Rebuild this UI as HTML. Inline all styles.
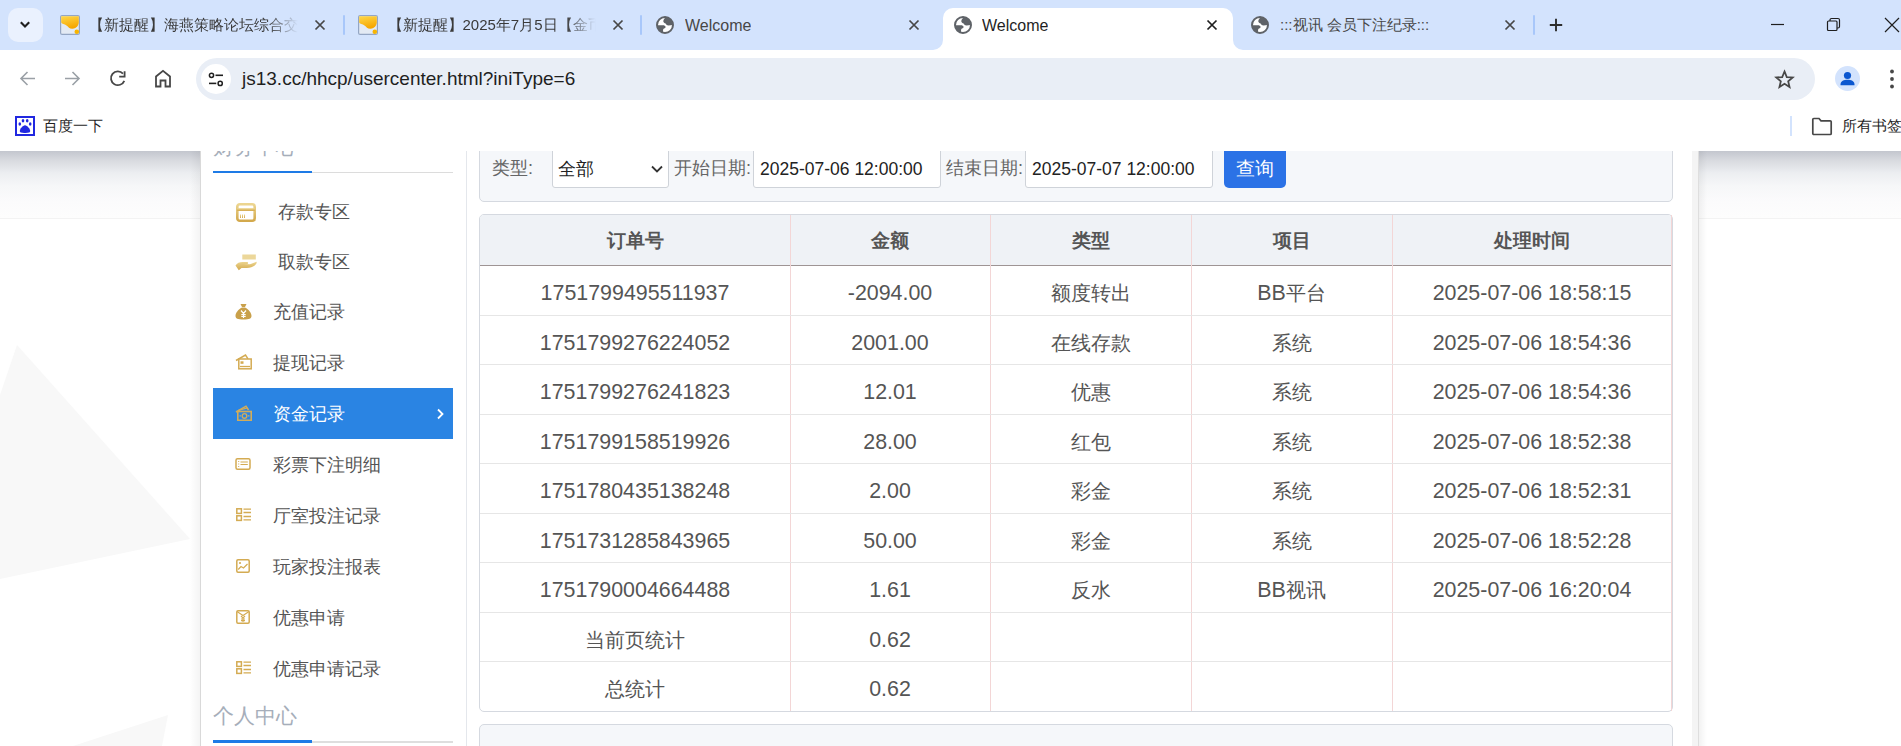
<!DOCTYPE html>
<html><head><meta charset="utf-8">
<style>
*{box-sizing:border-box;margin:0;padding:0}
html,body{width:1901px;height:746px;overflow:hidden;background:#fff;font-family:"Liberation Sans",sans-serif}
body{position:relative}
.a{position:absolute}
#tabs{left:0;top:0;width:1901px;height:50px;background:#d3e3fd}
.tt{position:absolute;top:15px;height:20px;line-height:20px;font-size:15px;color:#1f1f1f;white-space:nowrap;overflow:hidden}
.fade{-webkit-mask-image:linear-gradient(to right,#000 84%,transparent 98%)}
.sep{position:absolute;width:2px;height:20px;background:#a8c7fa;top:15px;border-radius:1px}
#toolbar{left:0;top:50px;width:1901px;height:57px;background:#fff}
#omni{left:196px;top:58px;width:1619px;height:42px;border-radius:21px;background:#e9eef6}
#bm{left:0;top:107px;width:1901px;height:43px;background:#fff}
#page{left:0;top:150px;width:1901px;height:596px;background:#fff;overflow:hidden}
.stitle{font-size:21px;line-height:30px;color:#a6aeba;white-space:nowrap}
.item{left:12px;width:240px;height:50.75px}
.item .tx{position:absolute;left:60px;top:1px;line-height:50px;font-size:18px;color:#555;white-space:nowrap}
.item.act{background:#2a84e3}
.item.act .tx{color:#fff}
.flab{top:0;line-height:37px;font-size:18px;color:#666;white-space:nowrap}
.fbox{top:-10px;height:48px;background:#fff;border:1px solid #cfd3d9;border-radius:3px}
.fin{position:absolute;left:6px;top:10px;line-height:37px;font-size:17.5px;color:#222;white-space:nowrap}
.th{height:50px;line-height:52px;text-align:center;font-size:18.6px;font-weight:bold;color:#555;white-space:nowrap}
.cj{font-size:20.4px}
.td{line-height:49px;text-align:center;font-size:21.4px;color:#555;white-space:nowrap}
</style></head><body>
<!-- TABS -->
<div id="tabs" class="a">
  <div class="a" style="left:8px;top:8px;width:35px;height:34px;border-radius:10px;background:#eaf1fe"></div>
  <svg class="a" style="left:17px;top:16px" width="16" height="16" viewBox="0 0 16 16"><path d="M3.8 6.3 L8 10.5 L12.2 6.3" fill="none" stroke="#1f1f1f" stroke-width="2.1"/></svg>
  <!-- tab1 -->
  <svg class="a" style="left:60px;top:15px" width="20" height="20" viewBox="0 0 20 20"><defs><linearGradient id="fy" x1="0" y1="0" x2="0.3" y2="1"><stop offset="0" stop-color="#ffd84a"/><stop offset="1" stop-color="#f6a700"/></linearGradient></defs><rect x="0.6" y="0.6" width="18.8" height="18.8" rx="1.5" fill="#e3eaf4" stroke="#94a6c4" stroke-width="1.2"/><path d="M1.2 1.2 H18.8 V7.5 C18.6 10 17 13.5 12.5 13.8 C9.5 14 8.5 12 6.5 10.5 C4.5 9 2 9 1.2 7.5Z" fill="url(#fy)"/><circle cx="16.8" cy="16.8" r="2.3" fill="#f7b400"/></svg>
  <div class="tt fade" style="left:89px;width:213px;color:#3a3a3a">【新提醒】海燕策略论坛综合交流</div>
  <svg class="a" style="left:314px;top:19px" width="12" height="12" viewBox="0 0 12 12"><path d="M1.5 1.5L10.5 10.5M10.5 1.5L1.5 10.5" stroke="#474747" stroke-width="1.75"/></svg>
  <div class="sep" style="left:343px"></div>
  <!-- tab2 -->
  <svg class="a" style="left:358px;top:15px" width="20" height="20" viewBox="0 0 20 20"><defs><linearGradient id="fy" x1="0" y1="0" x2="0.3" y2="1"><stop offset="0" stop-color="#ffd84a"/><stop offset="1" stop-color="#f6a700"/></linearGradient></defs><rect x="0.6" y="0.6" width="18.8" height="18.8" rx="1.5" fill="#e3eaf4" stroke="#94a6c4" stroke-width="1.2"/><path d="M1.2 1.2 H18.8 V7.5 C18.6 10 17 13.5 12.5 13.8 C9.5 14 8.5 12 6.5 10.5 C4.5 9 2 9 1.2 7.5Z" fill="url(#fy)"/><circle cx="16.8" cy="16.8" r="2.3" fill="#f7b400"/></svg>
  <div class="tt fade" style="left:387.5px;width:212px;color:#3a3a3a">【新提醒】2025年7月5日【金币</div>
  <svg class="a" style="left:612px;top:19px" width="12" height="12" viewBox="0 0 12 12"><path d="M1.5 1.5L10.5 10.5M10.5 1.5L1.5 10.5" stroke="#474747" stroke-width="1.75"/></svg>
  <div class="sep" style="left:640px"></div>
  <!-- tab3 -->
  <svg class="a globe" style="left:656px;top:16px" width="18" height="18" viewBox="0 0 18 18"><circle cx="9" cy="9" r="8" fill="#fff" stroke="#5f6368" stroke-width="2"/><path d="M9.8 1.2 C8.6 2.2 7.4 3.6 7.3 5.2 C7.2 6.6 8.8 6.8 9.6 7.6 C10.4 8.6 10.8 9.6 12.6 9.6 C14 9.6 15.2 9.2 16.8 9 A8 8 0 0 0 9.8 1.2Z" fill="#5f6368"/><path d="M1.2 9.3 L6.8 9.3 C8.2 9.3 9.6 9.8 9.6 11 C9.6 12.2 8 12.3 7.4 13 C7 13.6 7 15 7 16.8 A8 8 0 0 1 1.2 9.3Z" fill="#5f6368"/></svg>
  <div class="tt" style="left:685px;color:#474747;font-size:16px;top:16px">Welcome</div>
  <svg class="a" style="left:908px;top:19px" width="12" height="12" viewBox="0 0 12 12"><path d="M1.5 1.5L10.5 10.5M10.5 1.5L1.5 10.5" stroke="#474747" stroke-width="1.75"/></svg>
  <!-- active tab4 -->
  <svg class="a" style="left:933px;top:8px" width="310" height="42" viewBox="0 0 310 42"><path d="M0 42 A10 10 0 0 0 10 32 V10 A10 10 0 0 1 20 0 H290 A10 10 0 0 1 300 10 V32 A10 10 0 0 0 310 42Z" fill="#fff"/></svg>
  <svg class="a" style="left:954px;top:16px" width="18" height="18" viewBox="0 0 18 18"><circle cx="9" cy="9" r="8" fill="#fff" stroke="#5f6368" stroke-width="2"/><path d="M9.8 1.2 C8.6 2.2 7.4 3.6 7.3 5.2 C7.2 6.6 8.8 6.8 9.6 7.6 C10.4 8.6 10.8 9.6 12.6 9.6 C14 9.6 15.2 9.2 16.8 9 A8 8 0 0 0 9.8 1.2Z" fill="#5f6368"/><path d="M1.2 9.3 L6.8 9.3 C8.2 9.3 9.6 9.8 9.6 11 C9.6 12.2 8 12.3 7.4 13 C7 13.6 7 15 7 16.8 A8 8 0 0 1 1.2 9.3Z" fill="#5f6368"/></svg>
  <div class="tt" style="left:982px;font-size:16px;top:16px">Welcome</div>
  <svg class="a" style="left:1206px;top:19px" width="12" height="12" viewBox="0 0 12 12"><path d="M1.5 1.5L10.5 10.5M10.5 1.5L1.5 10.5" stroke="#1f1f1f" stroke-width="1.75"/></svg>
  <!-- tab5 -->
  <svg class="a" style="left:1251px;top:16px" width="18" height="18" viewBox="0 0 18 18"><circle cx="9" cy="9" r="8" fill="#fff" stroke="#5f6368" stroke-width="2"/><path d="M9.8 1.2 C8.6 2.2 7.4 3.6 7.3 5.2 C7.2 6.6 8.8 6.8 9.6 7.6 C10.4 8.6 10.8 9.6 12.6 9.6 C14 9.6 15.2 9.2 16.8 9 A8 8 0 0 0 9.8 1.2Z" fill="#5f6368"/><path d="M1.2 9.3 L6.8 9.3 C8.2 9.3 9.6 9.8 9.6 11 C9.6 12.2 8 12.3 7.4 13 C7 13.6 7 15 7 16.8 A8 8 0 0 1 1.2 9.3Z" fill="#5f6368"/></svg>
  <div class="tt" style="left:1280px;color:#474747">:::视讯 会员下注纪录:::</div>
  <svg class="a" style="left:1504px;top:19px" width="12" height="12" viewBox="0 0 12 12"><path d="M1.5 1.5L10.5 10.5M10.5 1.5L1.5 10.5" stroke="#474747" stroke-width="1.75"/></svg>
  <div class="sep" style="left:1533px"></div>
  <svg class="a" style="left:1548.5px;top:18px" width="14" height="14" viewBox="0 0 14 14"><path d="M7 0.8V13.2M0.8 7H13.2" stroke="#2e2e2e" stroke-width="1.9"/></svg>
  <!-- window controls -->
  <svg class="a" style="left:1770px;top:18px" width="15" height="14" viewBox="0 0 15 14"><path d="M1 6.5H14" stroke="#1f1f1f" stroke-width="1.2"/></svg>
  <svg class="a" style="left:1826px;top:17px" width="15" height="15" viewBox="0 0 15 15"><rect x="1.5" y="4" width="9.5" height="9.5" rx="1" fill="none" stroke="#1f1f1f" stroke-width="1.2"/><path d="M4 4 V3 A1.5 1.5 0 0 1 5.5 1.5 H12 A1.5 1.5 0 0 1 13.5 3 V9.5 A1.5 1.5 0 0 1 12 11 H11" fill="none" stroke="#1f1f1f" stroke-width="1.2"/></svg>
  <svg class="a" style="left:1884px;top:17px" width="16" height="16" viewBox="0 0 16 16"><path d="M1 1L15 15M15 1L1 15" stroke="#1f1f1f" stroke-width="1.2"/></svg>
</div>

<!-- TOOLBAR -->
<div id="toolbar" class="a">
  <svg class="a" style="left:19px;top:20px" width="17" height="17" viewBox="0 0 17 17"><path d="M16 8.5H2M8.5 2L2 8.5L8.5 15" fill="none" stroke="#9aa0a6" stroke-width="1.6"/></svg>
  <svg class="a" style="left:64px;top:20px" width="17" height="17" viewBox="0 0 17 17"><path d="M1 8.5H15M8.5 2L15 8.5L8.5 15" fill="none" stroke="#9aa0a6" stroke-width="1.6"/></svg>
  <svg class="a" style="left:109px;top:20px" width="17" height="17" viewBox="0 0 17 17"><path d="M15.3 10.8 A6.9 6.9 0 1 1 14 3.6" fill="none" stroke="#474747" stroke-width="1.8"/><path d="M10.2 6.7 H15.6 V1.2" fill="none" stroke="#474747" stroke-width="1.8"/></svg>
  <svg class="a" style="left:154px;top:19px" width="18" height="19" viewBox="0 0 18 19"><path d="M2 17.5V7.5L9 1.8L16 7.5V17.5H11.5V11.5H6.5V17.5Z" fill="none" stroke="#474747" stroke-width="1.8" stroke-linejoin="miter"/></svg>
</div>
<div id="omni" class="a">
  <div class="a" style="left:5px;top:6px;width:30px;height:30px;border-radius:15px;background:#fff"></div>
  <svg class="a" style="left:12px;top:14px" width="16" height="15" viewBox="0 0 16 15"><circle cx="3.5" cy="3.3" r="2.1" fill="none" stroke="#1f1f1f" stroke-width="1.5"/><path d="M7.5 3.3H15" stroke="#1f1f1f" stroke-width="1.6"/><circle cx="12.2" cy="11.4" r="2.1" fill="none" stroke="#1f1f1f" stroke-width="1.5"/><path d="M1 11.4H8.3" stroke="#1f1f1f" stroke-width="1.6"/></svg>
  <div class="a" id="url" style="left:46px;top:10px;font-size:19px;line-height:22px;color:#1f1f1f;white-space:nowrap">js13.cc/hhcp/usercenter.html?iniType=6</div>
  <svg class="a" style="left:1578px;top:11px" width="21" height="21" viewBox="0 0 24 24"><path d="M12 2.8L14.6 9.2L21.4 9.6L16.2 14L17.8 20.7L12 17L6.2 20.7L7.8 14L2.6 9.6L9.4 9.2Z" fill="none" stroke="#474747" stroke-width="2" stroke-linejoin="miter"/></svg>
</div>
<div class="a" style="left:1835px;top:66px;width:25px;height:25px;border-radius:13px;background:#d3e3fd"></div>
<svg class="a" style="left:1835px;top:66px" width="25" height="25" viewBox="0 0 25 25"><circle cx="12.5" cy="9.5" r="3.6" fill="#0b57d0"/><path d="M5.5 18.5 C5.5 15 9 13.8 12.5 13.8 C16 13.8 19.5 15 19.5 18.5 V19.3 H5.5Z" fill="#0b57d0"/></svg>
<svg class="a" style="left:1888px;top:69px" width="8" height="20" viewBox="0 0 8 20"><circle cx="4" cy="2.5" r="1.9" fill="#474747"/><circle cx="4" cy="10" r="1.9" fill="#474747"/><circle cx="4" cy="17.5" r="1.9" fill="#474747"/></svg>
<!-- BOOKMARKS -->
<div id="bm" class="a">
  <svg class="a" style="left:15px;top:9px" width="20" height="20" viewBox="0 0 20 20"><rect x="1" y="1" width="18" height="18" fill="#fff" stroke="#2128e0" stroke-width="2"/><ellipse cx="8" cy="4.8" rx="1.3" ry="1.7" fill="#2128e0"/><ellipse cx="12.2" cy="4.8" rx="1.3" ry="1.7" fill="#2128e0"/><ellipse cx="4.8" cy="8" rx="1.3" ry="1.7" fill="#2128e0"/><ellipse cx="15.2" cy="8" rx="1.3" ry="1.7" fill="#2128e0"/><path d="M10 9.2C7.8 9.2 4.8 13 4.8 15 C4.8 16.8 7 16.9 10 16.9 C13 16.9 15.2 16.8 15.2 15 C15.2 13 12.2 9.2 10 9.2Z" fill="#2128e0"/></svg>
  <div class="a" style="left:43px;top:9px;font-size:15px;line-height:20px;color:#1f1f1f;white-space:nowrap">百度一下</div>
  <div class="a" style="left:1790px;top:9px;width:2px;height:20px;background:#d3e3fd"></div>
  <svg class="a" style="left:1811px;top:10px" width="22" height="19" viewBox="0 0 22 19"><path d="M1.8 2.5 A1 1 0 0 1 2.8 1.5 H8 L10 3.8 H19.2 A1 1 0 0 1 20.2 4.8 V16.5 A1 1 0 0 1 19.2 17.5 H2.8 A1 1 0 0 1 1.8 16.5Z" fill="none" stroke="#474747" stroke-width="1.7"/></svg>
  <div class="a" style="left:1842px;top:9px;font-size:15px;line-height:20px;color:#1f1f1f;white-space:nowrap">所有书签</div>
</div>

<div id="page" class="a">

<div class="a" style="left:0;top:1px;width:1901px;height:67px;background:linear-gradient(#c3c6ce,#d8dadf 14%,#eceef1 33%,#f6f7f8 52%,#fbfbfc 75%,#fdfdfd)"></div>
<div class="a" style="left:0;top:68px;width:1901px;height:1px;background:#f3f3f3"></div>
<svg class="a" style="left:0;top:0" width="200" height="596"><polygon points="17,195 190,389 0,429 0,245" fill="#f8f8f8"/><polygon points="168,565 162,596 73,596" fill="#f8f8f8"/></svg>
<div class="a" style="left:467px;top:0;width:1225px;height:596px;background:#fff"></div>
<div class="a" style="left:1692px;top:0;width:6px;height:596px;background:#f4f4f4"></div>
<div class="a" style="left:1698px;top:0;width:1px;height:596px;background:#dedede"></div>
<div class="a" style="left:1699px;top:0;width:8px;height:596px;background:linear-gradient(to right,rgba(0,0,0,.05),rgba(0,0,0,0))"></div>
<div class="a" style="left:190px;top:0;width:10px;height:596px;background:linear-gradient(to right,rgba(0,0,0,0),rgba(0,0,0,.045))"></div>
<div id="side" class="a" style="left:200px;top:0;width:267px;height:596px;background:#fff;border-left:1px solid #d9d9d9;border-right:1px solid #e4e7ec">
<div class="a stitle" style="left:12px;top:-18px">财务中心</div>
<div class="a" style="left:12px;top:22px;width:240px;height:1px;background:#dcdcdc"></div>
<div class="a" style="left:12px;top:21px;width:99px;height:2px;background:#1e7be6"></div>
<div class="a item" style="top:34px"><span class="tx" style="left:65px;top:3px">存款专区</span></div><div class="a item" style="top:85px"><span class="tx" style="left:65px;top:2px">取款专区</span></div><div class="a item" style="top:136px"><span class="tx">充值记录</span></div><div class="a item" style="top:187px"><span class="tx">提现记录</span></div><div class="a item act" style="top:238px"><span class="tx">资金记录</span><svg class="a" style="left:223px;top:20px" width="9" height="12" viewBox="0 0 9 12"><path d="M2 1.5L6.5 6L2 10.5" fill="none" stroke="#fff" stroke-width="1.8"/></svg></div><div class="a item" style="top:289px"><span class="tx">彩票下注明细</span></div><div class="a item" style="top:340px"><span class="tx">厅室投注记录</span></div><div class="a item" style="top:391px"><span class="tx">玩家投注报表</span></div><div class="a item" style="top:442px"><span class="tx">优惠申请</span></div><div class="a item" style="top:493px"><span class="tx">优惠申请记录</span></div>
<div class="a stitle" style="left:12px;top:550.5px">个人中心</div>
<div class="a" style="left:12px;top:591px;width:240px;height:2px;background:#dedede"></div>
<div class="a" style="left:12px;top:590px;width:99px;height:3px;background:#1e7be6"></div>
</div>
<svg class="a" style="left:236px;top:53px" width="20" height="19" viewBox="0 0 20 19"><defs><linearGradient id="gg" x1="0" y1="0" x2="0" y2="1"><stop offset="0" stop-color="#ecd590"/><stop offset="1" stop-color="#d3a94c"/></linearGradient></defs><rect x="1.3" y="1.3" width="17.4" height="16.4" rx="2.5" fill="none" stroke="url(#gg)" stroke-width="2.6"/><rect x="1" y="5.2" width="18" height="2.8" fill="url(#gg)"/><path d="M4.5 11.5V15M6.5 11.5V15M8.5 11.5V15" stroke="url(#gg)" stroke-width="1"/></svg><svg class="a" style="left:235px;top:104px" width="22" height="17" viewBox="0 0 22 17"><defs><linearGradient id="gg" x1="0" y1="0" x2="0" y2="1"><stop offset="0" stop-color="#ecd590"/><stop offset="1" stop-color="#d3a94c"/></linearGradient></defs><rect x="7.3" y="0.5" width="13.5" height="5" fill="#ecd79a"/><path d="M0.5 11.5 C2 9 4.5 8 7.5 8 H12 C13.5 8 13.5 10 12 10 H8.5 L15 10.3 L21.5 7.8 C22.3 9.5 20.5 11 18 12.5 C15.5 14 11 14.2 6.5 14 L3.8 16.2Z" fill="url(#gg)"/></svg><svg class="a" style="left:235px;top:153px" width="17" height="17" viewBox="0 0 17 17"><path d="M5.5 1 H11.5 L10 4 H7Z M7 4.5 H10 C14 6.5 16.5 10 16.5 13 C16.5 15.5 14.5 16.5 8.5 16.5 C2.5 16.5 0.5 15.5 0.5 13 C0.5 10 3 6.5 7 4.5Z" fill="#c9a04a"/><path d="M6 7.5L8.5 10.5L11 7.5M8.5 10.5V15M6.3 11.5H10.7M6.3 13.3H10.7" fill="none" stroke="#fff" stroke-width="1.2"/></svg><svg class="a" style="left:235px;top:204px" width="17" height="16" viewBox="0 0 17 16"><path d="M1 6.5 L10.5 1 L13 4.8" fill="none" stroke="#d4ab52" stroke-width="1.5"/><rect x="3.8" y="5" width="12.4" height="9.8" fill="#fff" stroke="#d4ab52" stroke-width="1.5"/><rect x="5.5" y="7.3" width="3" height="2.5" fill="#d4ab52"/><path d="M5 12.5H15" stroke="#d4ab52" stroke-width="1.3"/></svg><svg class="a" style="left:235px;top:255px" width="17" height="16" viewBox="0 0 17 16"><path d="M1 7 L11 1.2 L13.5 5" fill="none" stroke="#d1ac5b" stroke-width="1.5"/><path d="M3 5.5 L12.5 2.8" stroke="#d1ac5b" stroke-width="1.2"/><rect x="2.8" y="6.5" width="13.4" height="8.8" fill="none" stroke="#d1ac5b" stroke-width="1.6"/><circle cx="9.5" cy="10.9" r="2.3" fill="none" stroke="#d1ac5b" stroke-width="1.4"/><path d="M4.5 10.9H6M13 10.9H14.5" stroke="#d1ac5b" stroke-width="1.2"/></svg><svg class="a" style="left:235px;top:308px" width="16" height="12" viewBox="0 0 16 12"><rect x="1" y="0.8" width="14" height="10.4" rx="1.5" fill="none" stroke="#d4ab52" stroke-width="1.5"/><path d="M3.2 3.5H4.2M3.2 6H4.2M3.2 8.5H4.2M5.5 4H12.8M5.5 6.5H12.8" stroke="#d4ab52" stroke-width="1.2"/></svg><svg class="a" style="left:236px;top:358px" width="15" height="14" viewBox="0 0 15 14"><rect x="0.8" y="0.8" width="4.6" height="4.6" fill="none" stroke="#d4ab52" stroke-width="1.5"/><rect x="0.8" y="7.8" width="4.6" height="4.6" fill="none" stroke="#d4ab52" stroke-width="1.5"/><path d="M7.5 1.2H15M7.5 4.5H15M7.5 8.5H15M7.5 11.8H15" stroke="#d4ab52" stroke-width="1.3"/></svg><svg class="a" style="left:236px;top:409px" width="14" height="14" viewBox="0 0 14 14"><rect x="0.8" y="0.8" width="12.4" height="12.4" rx="1.2" fill="none" stroke="#d4ab52" stroke-width="1.5"/><circle cx="4" cy="4" r="1.1" fill="#d4ab52"/><path d="M2.2 10.5L5 7.5L7.5 9L11.5 5" fill="none" stroke="#d4ab52" stroke-width="1.2"/></svg><svg class="a" style="left:236px;top:460px" width="14" height="14" viewBox="0 0 14 14"><rect x="0.8" y="0.8" width="12.4" height="12.4" rx="1.2" fill="none" stroke="#d4ab52" stroke-width="1.5"/><path d="M1 1.5L7 5.5L13 1.5" fill="none" stroke="#d4ab52" stroke-width="1.1"/><path d="M5 6L7 8L9 6M7 8V12M5 9H9M5 10.6H9" fill="none" stroke="#d4ab52" stroke-width="1.1"/></svg><svg class="a" style="left:236px;top:511px" width="15" height="14" viewBox="0 0 15 14"><rect x="0.8" y="0.8" width="4.6" height="4.6" fill="none" stroke="#d4ab52" stroke-width="1.5"/><rect x="0.8" y="7.8" width="4.6" height="4.6" fill="none" stroke="#d4ab52" stroke-width="1.5"/><path d="M7.5 1.2H15M7.5 4.5H15M7.5 8.5H15M7.5 11.8H15" stroke="#d4ab52" stroke-width="1.3"/></svg>

<div class="a" style="left:479px;top:-40px;width:1194px;height:92px;background:#f5f7fa;border:1px solid #d5d9e0;border-radius:5px"></div>
<div class="a flab" style="left:492px">类型:</div>
<div class="a fbox" style="left:552px;width:117px"><span style="position:absolute;left:5px;top:10px;line-height:37px;font-size:18px;color:#222">全部</span>
<svg class="a" style="left:98px;top:24px" width="12" height="9" viewBox="0 0 12 9"><path d="M1 1.5L6 6.5L11 1.5" fill="none" stroke="#333" stroke-width="1.8"/></svg></div>
<div class="a flab" style="left:674px">开始日期:</div>
<div class="a fbox" style="left:753px;width:188px"><span class="fin">2025-07-06 12:00:00</span></div>
<div class="a flab" style="left:946px">结束日期:</div>
<div class="a fbox" style="left:1025px;width:188px"><span class="fin">2025-07-07 12:00:00</span></div>
<div class="a" style="left:1224px;top:-10px;width:62px;height:48px;background:#2b72e6;border-radius:5px"><span style="position:absolute;left:0;width:62px;text-align:center;top:10px;line-height:37px;font-size:18.5px;color:#fff">查询</span></div>
<div class="a" style="left:479px;top:64px;width:1194px;height:498px;border:1px solid #d5d9e0;border-radius:5px;background:#fff"></div>
<div class="a" style="left:480px;top:65px;width:1192px;height:50px;background:#eff2f6;border-radius:4px 4px 0 0"></div>
<div class="a" style="left:480px;top:115px;width:1191px;height:1px;background:#9e9494"></div>
<div class="a" style="left:790px;top:65px;width:1px;height:496px;background:#f3d6d6"></div>
<div class="a" style="left:990px;top:65px;width:1px;height:496px;background:#f3d6d6"></div>
<div class="a" style="left:1191px;top:65px;width:1px;height:496px;background:#f3d6d6"></div>
<div class="a" style="left:1392px;top:65px;width:1px;height:496px;background:#f3d6d6"></div>
<div class="a" style="left:1671px;top:65px;width:1px;height:496px;background:#f3d6d6"></div>
<div class="a" style="left:480px;top:165px;width:1191px;height:1px;background:#e6e6e6"></div>
<div class="a" style="left:480px;top:214px;width:1191px;height:1px;background:#e6e6e6"></div>
<div class="a" style="left:480px;top:264px;width:1191px;height:1px;background:#e6e6e6"></div>
<div class="a" style="left:480px;top:313px;width:1191px;height:1px;background:#e6e6e6"></div>
<div class="a" style="left:480px;top:363px;width:1191px;height:1px;background:#e6e6e6"></div>
<div class="a" style="left:480px;top:412px;width:1191px;height:1px;background:#e6e6e6"></div>
<div class="a" style="left:480px;top:462px;width:1191px;height:1px;background:#e6e6e6"></div>
<div class="a" style="left:480px;top:511px;width:1191px;height:1px;background:#e6e6e6"></div>
<div class="a th" style="left:480px;top:65px;width:310px">订单号</div>
<div class="a th" style="left:790px;top:65px;width:200px">金额</div>
<div class="a th" style="left:990px;top:65px;width:201px">类型</div>
<div class="a th" style="left:1191px;top:65px;width:201px">项目</div>
<div class="a th" style="left:1392px;top:65px;width:280px">处理时间</div>
<div class="a td" style="left:480px;top:119px;width:310px">1751799495511937</div>
<div class="a td" style="left:790px;top:119px;width:200px">-2094.00</div>
<div class="a td" style="left:990px;top:119px;width:201px"><span class="cj">额度转出</span></div>
<div class="a td" style="left:1191px;top:119px;width:201px">BB<span class="cj">平台</span></div>
<div class="a td" style="left:1392px;top:119px;width:280px">2025-07-06 18:58:15</div>
<div class="a td" style="left:480px;top:169px;width:310px">1751799276224052</div>
<div class="a td" style="left:790px;top:169px;width:200px">2001.00</div>
<div class="a td" style="left:990px;top:169px;width:201px"><span class="cj">在线存款</span></div>
<div class="a td" style="left:1191px;top:169px;width:201px"><span class="cj">系统</span></div>
<div class="a td" style="left:1392px;top:169px;width:280px">2025-07-06 18:54:36</div>
<div class="a td" style="left:480px;top:218px;width:310px">1751799276241823</div>
<div class="a td" style="left:790px;top:218px;width:200px">12.01</div>
<div class="a td" style="left:990px;top:218px;width:201px"><span class="cj">优惠</span></div>
<div class="a td" style="left:1191px;top:218px;width:201px"><span class="cj">系统</span></div>
<div class="a td" style="left:1392px;top:218px;width:280px">2025-07-06 18:54:36</div>
<div class="a td" style="left:480px;top:268px;width:310px">1751799158519926</div>
<div class="a td" style="left:790px;top:268px;width:200px">28.00</div>
<div class="a td" style="left:990px;top:268px;width:201px"><span class="cj">红包</span></div>
<div class="a td" style="left:1191px;top:268px;width:201px"><span class="cj">系统</span></div>
<div class="a td" style="left:1392px;top:268px;width:280px">2025-07-06 18:52:38</div>
<div class="a td" style="left:480px;top:317px;width:310px">1751780435138248</div>
<div class="a td" style="left:790px;top:317px;width:200px">2.00</div>
<div class="a td" style="left:990px;top:317px;width:201px"><span class="cj">彩金</span></div>
<div class="a td" style="left:1191px;top:317px;width:201px"><span class="cj">系统</span></div>
<div class="a td" style="left:1392px;top:317px;width:280px">2025-07-06 18:52:31</div>
<div class="a td" style="left:480px;top:367px;width:310px">1751731285843965</div>
<div class="a td" style="left:790px;top:367px;width:200px">50.00</div>
<div class="a td" style="left:990px;top:367px;width:201px"><span class="cj">彩金</span></div>
<div class="a td" style="left:1191px;top:367px;width:201px"><span class="cj">系统</span></div>
<div class="a td" style="left:1392px;top:367px;width:280px">2025-07-06 18:52:28</div>
<div class="a td" style="left:480px;top:416px;width:310px">1751790004664488</div>
<div class="a td" style="left:790px;top:416px;width:200px">1.61</div>
<div class="a td" style="left:990px;top:416px;width:201px"><span class="cj">反水</span></div>
<div class="a td" style="left:1191px;top:416px;width:201px">BB<span class="cj">视讯</span></div>
<div class="a td" style="left:1392px;top:416px;width:280px">2025-07-06 16:20:04</div>
<div class="a td" style="left:480px;top:466px;width:310px"><span class="cj">当前页统计</span></div>
<div class="a td" style="left:790px;top:466px;width:200px">0.62</div>
<div class="a td" style="left:480px;top:515px;width:310px"><span class="cj">总统计</span></div>
<div class="a td" style="left:790px;top:515px;width:200px">0.62</div>
<div class="a" style="left:479px;top:574px;width:1194px;height:60px;background:#f5f7fa;border:1px solid #d5d9e0;border-radius:5px"></div><div class="a" style="left:0;top:0;width:1901px;height:1px;background:#fff"></div>
</div>
</body></html>
